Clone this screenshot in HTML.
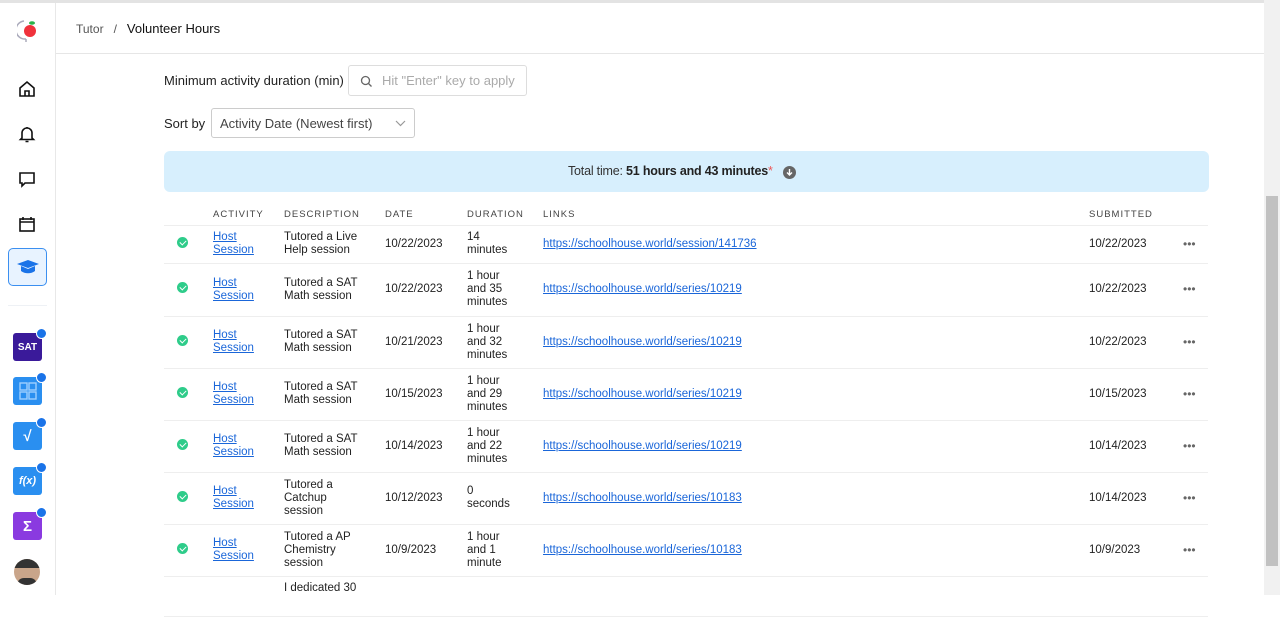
<!DOCTYPE html>
<html><head><style>
*{box-sizing:border-box;margin:0;padding:0}
body{width:1280px;height:595px;overflow:hidden;background:#fff;font-family:"Liberation Sans",sans-serif;color:#222;font-size:12px;position:relative}
.top{position:absolute;top:0;left:0;width:1280px;height:3px;background:#e3e3e3}
.side{position:absolute;top:3px;left:0;width:56px;height:592px;border-right:1px solid #e8e8e8;background:#fff}
.hdr{position:absolute;top:3px;left:56px;width:1208px;height:51px;border-bottom:1px solid #e6e6e6}
.ic{position:absolute;left:17px}
.app{position:absolute;left:13px;width:29px;height:28px;border-radius:3px;color:#fff;font-weight:bold;font-size:10px;display:flex;align-items:center;justify-content:center}
.dot{position:absolute;right:-5px;top:-5px;width:11px;height:11px;border-radius:50%;background:#1a73e8;border:1.5px solid #fff}
.abs{position:absolute}
.lbl{font-size:13px;color:#222}
.box{border:1px solid #ddd;border-radius:3px;background:#fff}
table{position:absolute;left:164px;top:205px;width:1044px;border-collapse:collapse}
th{font-size:9.5px;letter-spacing:1px;color:#444;font-weight:normal;text-align:left;height:20px;border-bottom:1px solid #eee}
td{font-size:11.5px;line-height:13px;border-bottom:1px solid #eee;vertical-align:middle;color:#222}
td a{color:#1a66d9;text-decoration:underline}
.chk{display:inline-block;width:11px;height:11px;border-radius:50%;background:#2ecc8a;position:relative;margin-left:13px}
.chk:after{content:"";position:absolute;left:3.5px;top:2px;width:3px;height:5px;border:solid #fff;border-width:0 1.5px 1.5px 0;transform:rotate(45deg)}
.dots{color:#666;font-size:12px;padding-left:0}
.sb{position:absolute;left:1264px;top:0;width:16px;height:595px;background:#f1f1f1}
.th{position:absolute;left:1266px;top:196px;width:12px;height:370px;background:#c1c1c1}
</style></head><body>
<div class="top"></div>
<div class="side">
<svg class="abs" style="left:17px;top:14px" width="22" height="28" viewBox="0 0 22 28"><path d="M7 4 A9 9 0 0 0 9 22" fill="none" stroke="#aab" stroke-width="1.5"/><circle cx="13" cy="14" r="6" fill="#f0323c"/><ellipse cx="15" cy="6" rx="3" ry="1.8" fill="#2ab34a"/><path d="M9 22v3" stroke="#aab" stroke-width="1.5"/></svg>
<svg class="ic" style="top:76px" width="20" height="20" viewBox="0 0 20 20" fill="none" stroke="#111" stroke-width="1.6"><path d="M3 9l7-6 7 6v8H3z"/><path d="M8 17v-5h4v5"/></svg>
<svg class="ic" style="top:121px" width="20" height="20" viewBox="0 0 20 20" fill="none" stroke="#111" stroke-width="1.6"><path d="M5 14V9a5 5 0 0110 0v5l1.5 1.5h-13z"/><path d="M8.5 17.5h3M10 3v1"/></svg>
<svg class="ic" style="top:166px" width="20" height="20" viewBox="0 0 20 20" fill="none" stroke="#111" stroke-width="1.6"><path d="M3 4h14v10H8l-3 3v-3H3z"/></svg>
<svg class="ic" style="top:211px" width="20" height="20" viewBox="0 0 20 20" fill="none" stroke="#111" stroke-width="1.6"><rect x="3" y="5" width="14" height="12"/><path d="M3 8h14M6 3v3M14 3v3"/></svg>
<div class="abs" style="left:8px;top:245px;width:39px;height:38px;border:1.5px solid #3b8ff0;border-radius:5px;background:#e8f3ff"></div>
<svg class="abs" style="left:16px;top:256px" width="24" height="16" viewBox="0 0 24 16"><path d="M1 5l11-4 11 4-11 4z" fill="#1a73e8"/><path d="M5 7v5c4 3 10 3 14 0V7l-7 3z" fill="#1a73e8"/></svg>
<div class="abs" style="left:8px;top:302px;width:39px;height:1px;background:#eef1f5"></div>
<div class="app" style="top:330px;background:#3a1a9a">SAT<div class="dot"></div></div>
<div class="app" style="top:374px;background:#2a8ff0"><svg width="18" height="18" viewBox="0 0 18 18" fill="none" stroke="#9fd0ff" stroke-width="1.4"><rect x="1" y="1" width="7" height="7"/><rect x="10" y="1" width="7" height="7"/><rect x="1" y="10" width="7" height="7"/><rect x="10" y="10" width="7" height="7"/></svg><div class="dot"></div></div>
<div class="app" style="top:419px;background:#2a8ff0;font-size:15px">√<div class="dot"></div></div>
<div class="app" style="top:464px;background:#2a8ff0;font-size:11px;font-style:italic">f(x)<div class="dot"></div></div>
<div class="app" style="top:509px;background:#8a3ae0;font-size:15px">Σ<div class="dot"></div></div>
<div class="abs" style="left:14px;top:556px;width:26px;height:26px;border-radius:50%;background:#c9a58a;overflow:hidden"><div style="position:absolute;top:0;left:0;width:26px;height:9px;background:#333"></div><div style="position:absolute;bottom:0;left:3px;width:20px;height:7px;background:#333;border-radius:8px 8px 0 0"></div></div>
</div>
<div class="hdr"><span class="abs" style="left:20px;top:18px;font-size:12px;color:#555">Tutor &nbsp;&nbsp;/&nbsp;&nbsp; <span style="color:#111;font-size:13px">Volunteer Hours</span></span></div>
<div class="abs lbl" style="left:164px;top:73px">Minimum activity duration (min)</div>
<div class="abs box" style="left:348px;top:65px;width:179px;height:31px"><svg class="abs" style="left:11px;top:9px" width="13" height="13" viewBox="0 0 13 13" fill="none" stroke="#666" stroke-width="1.3"><circle cx="5.5" cy="5.5" r="4"/><path d="M8.5 8.5l3 3"/></svg><span class="abs" style="left:33px;top:7px;font-size:13px;color:#aaa">Hit "Enter" key to apply</span></div>
<div class="abs lbl" style="left:164px;top:116px">Sort by</div>
<div class="abs box" style="left:211px;top:108px;width:204px;height:30px;border-color:#ccc"><span class="abs" style="left:8px;top:7px;font-size:13px;color:#444">Activity Date (Newest first)</span><svg class="abs" style="left:183px;top:11px" width="11" height="7" viewBox="0 0 11 7" fill="none" stroke="#999" stroke-width="1.2"><path d="M1 1l4.5 4.5L10 1"/></svg></div>
<div class="abs" style="left:164px;top:151px;width:1045px;height:41px;background:#d7effd;border-radius:6px"><span class="abs" style="left:404px;top:13px;font-size:12.5px;color:#333;white-space:nowrap;letter-spacing:-0.2px">Total time: <b style="color:#222">51 hours and 43 minutes</b><span style="color:#e55">*</span></span><svg class="abs" style="left:619px;top:15px" width="13" height="13" viewBox="0 0 13 13"><circle cx="6.5" cy="6.5" r="6.5" fill="#666"/><path d="M6.5 3v6M4 6.5l2.5 2.5L9 6.5" stroke="#fff" stroke-width="1.4" fill="none"/></svg></div>
<table>
<tr><th style="width:49px"></th><th style="width:71px">ACTIVITY</th><th style="width:101px">DESCRIPTION</th><th style="width:82px">DATE</th><th style="width:76px">DURATION</th><th style="width:546px">LINKS</th><th style="width:94px">SUBMITTED</th><th></th></tr>
<tr style="height:38px"><td><span class="chk"></span></td><td><a>Host<br>Session</a></td><td>Tutored a Live<br>Help session</td><td>10/22/2023</td><td>14<br>minutes</td><td><a>https://schoolhouse.world/session/141736</a></td><td>10/22/2023</td><td class="dots">•••</td></tr>
<tr style="height:53px"><td><span class="chk"></span></td><td><a>Host<br>Session</a></td><td>Tutored a SAT<br>Math session</td><td>10/22/2023</td><td>1 hour<br>and 35<br>minutes</td><td><a>https://schoolhouse.world/series/10219</a></td><td>10/22/2023</td><td class="dots">•••</td></tr>
<tr style="height:52px"><td><span class="chk"></span></td><td><a>Host<br>Session</a></td><td>Tutored a SAT<br>Math session</td><td>10/21/2023</td><td>1 hour<br>and 32<br>minutes</td><td><a>https://schoolhouse.world/series/10219</a></td><td>10/22/2023</td><td class="dots">•••</td></tr>
<tr style="height:52px"><td><span class="chk"></span></td><td><a>Host<br>Session</a></td><td>Tutored a SAT<br>Math session</td><td>10/15/2023</td><td>1 hour<br>and 29<br>minutes</td><td><a>https://schoolhouse.world/series/10219</a></td><td>10/15/2023</td><td class="dots">•••</td></tr>
<tr style="height:52px"><td><span class="chk"></span></td><td><a>Host<br>Session</a></td><td>Tutored a SAT<br>Math session</td><td>10/14/2023</td><td>1 hour<br>and 22<br>minutes</td><td><a>https://schoolhouse.world/series/10219</a></td><td>10/14/2023</td><td class="dots">•••</td></tr>
<tr style="height:52px"><td><span class="chk"></span></td><td><a>Host<br>Session</a></td><td>Tutored a<br>Catchup<br>session</td><td>10/12/2023</td><td>0<br>seconds</td><td><a>https://schoolhouse.world/series/10183</a></td><td>10/14/2023</td><td class="dots">•••</td></tr>
<tr style="height:52px"><td><span class="chk"></span></td><td><a>Host<br>Session</a></td><td>Tutored a AP<br>Chemistry<br>session</td><td>10/9/2023</td><td>1 hour<br>and 1<br>minute</td><td><a>https://schoolhouse.world/series/10183</a></td><td>10/9/2023</td><td class="dots">•••</td></tr>
<tr style="height:40px"><td></td><td></td><td style="vertical-align:top;padding-top:5px">I dedicated 30</td><td></td><td></td><td></td><td></td><td></td></tr>
</table>
<div class="sb"></div><div class="th"></div>
</body></html>
